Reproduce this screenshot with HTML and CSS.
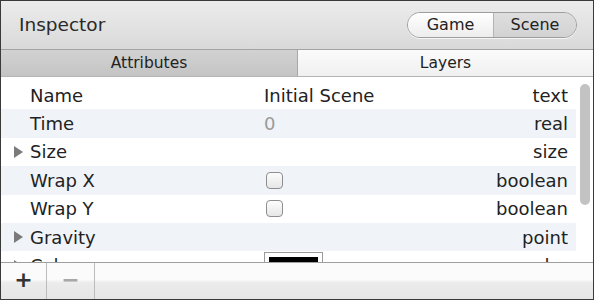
FILE: index.html
```html
<!DOCTYPE html>
<html lang="en">
<head>
  <meta charset="UTF-8">
  <title>Inspector</title>
  <link rel="stylesheet" href="styles.css">
</head>
<body>

<div class="inspector">
  <div class="titlebar">
    <span class="title">Inspector</span>
    <div class="segmented">
      <span class="seg">Game</span>
      <span class="seg seg-on">Scene</span>
    </div>
  </div>

  <div class="tabs">
    <div class="tab tab-on">Attributes</div>
    <div class="tab">Layers</div>
  </div>

  <div class="list">
    <div class="rows">
      <div class="row">
        <span class="disclose"></span><span>Name</span><span>Initial Scene</span><span class="type">text</span>
      </div>
      <div class="row">
        <span class="disclose"></span><span>Time</span><span class="muted">0</span><span class="type">real</span>
      </div>
      <div class="row">
        <span class="disclose"><i class="tri"></i></span><span>Size</span><span></span><span class="type">size</span>
      </div>
      <div class="row">
        <span class="disclose"></span><span>Wrap X</span><span><i class="check"></i></span><span class="type">boolean</span>
      </div>
      <div class="row">
        <span class="disclose"></span><span>Wrap Y</span><span><i class="check"></i></span><span class="type">boolean</span>
      </div>
      <div class="row">
        <span class="disclose"><i class="tri"></i></span><span>Gravity</span><span></span><span class="type">point</span>
      </div>
      <div class="row">
        <span class="disclose"><i class="tri"></i></span><span>Color</span><span class="top"><i class="swatch"></i></span><span class="type">color</span>
      </div>
    </div>
    <div class="scroller"><div class="thumb"></div></div>
  </div>

  <div class="footer">
    <span class="fbtn">+</span>
    <span class="fbtn off">&minus;</span>
  </div>
</div>

</body>
</html>
```

FILE: styles.css
```css
* { box-sizing: border-box; }
body { margin: 0; font-family: "DejaVu Sans", "Verdana", sans-serif; color: #222; }
.inspector { width: 594px; height: 300px; border: 1px solid #3a3a3a; display: flex; flex-direction: column; overflow: hidden; background: #fff; }

/* title bar */
.titlebar { height: 48px; flex: none; display: flex; align-items: center; justify-content: space-between; padding: 0 16px 0 18px; background: linear-gradient(#ececec, #d9d9d9); }
.title { font-size: 18.5px; color: #2a2a2a; padding-bottom: 2px; }
.segmented { display: flex; height: 26px; border: 1px solid #9d9d9d; border-radius: 13px; overflow: hidden; box-shadow: 0 1px 0 rgba(255,255,255,0.7); }
.seg { font-size: 16px; line-height: 24px; padding: 0 18px; color: #222; background: linear-gradient(#ffffff, #ededed); }
.seg:first-child { width: 85px; text-align: center; }
.seg-on { width: 83px; padding: 0; text-align: center; border-left: 1px solid #b4b4b4; background: linear-gradient(#dedede, #d2d2d2); }

/* tabs */
.tabs { height: 28px; flex: none; display: grid; grid-template-columns: 297px 1fr; border-top: 1px solid #a3a3a3; border-bottom: 1px solid #b5b5b5; }
.tab { font-size: 15.5px; line-height: 26px; text-align: center; background: linear-gradient(#fbfbfb, #f0f0f0); color: #222; }
.tab-on { background: linear-gradient(#d2d2d2, #c4c4c4); border-right: 1px solid #a8a8a8; }

/* attribute list */
.list { height: 185px; flex: none; display: flex; overflow: hidden; }
.rows { flex: 1; padding-top: 4px; }
.row { height: 28.4px; display: grid; grid-template-columns: 29px 234px 1fr auto; align-items: center; padding-right: 8px; font-size: 18px; }
.row:nth-child(even) { background: #f0f4f9; }
.muted { color: #9a9a9a; }
.type { text-align: right; }
.top { align-self: start; }
.disclose { display: flex; justify-content: flex-start; padding-left: 13px; }
.tri { width: 0; height: 0; border-left: 9px solid #7a7a7a; border-top: 6px solid transparent; border-bottom: 6px solid transparent; }
.check { display: block; width: 17px; height: 17px; margin-left: 2px; border: 1px solid #8e8e8e; border-radius: 4px; background: linear-gradient(#fdfdfd, #e6e6e6); }
.swatch { display: block; width: 59px; height: 22px; margin-top: 1px; border: 1px solid #9a9a9a; border-bottom: none; padding: 4px 4px 0; background: #fff; }
.swatch::before { content: ""; display: block; height: 16px; background: #000; }
.scroller { width: 17px; flex: none; padding: 7px 3px 0 4px; background: #fff; }
.thumb { height: 121px; border-radius: 5px; background: #c3c3c3; }

/* footer */
.footer { flex: 1; display: flex; border-top: 1px solid #9f9f9f; background: linear-gradient(#fbfbfb 45%, #ebebeb 55%, #e6e6e6); }
.fbtn { width: 46px; font-size: 22px; line-height: 34px; text-align: center; border-right: 1px solid #bcbcbc; color: #333; font-weight: bold; }
.fbtn.off { width: 48px; color: #a8a8a8; }
```
